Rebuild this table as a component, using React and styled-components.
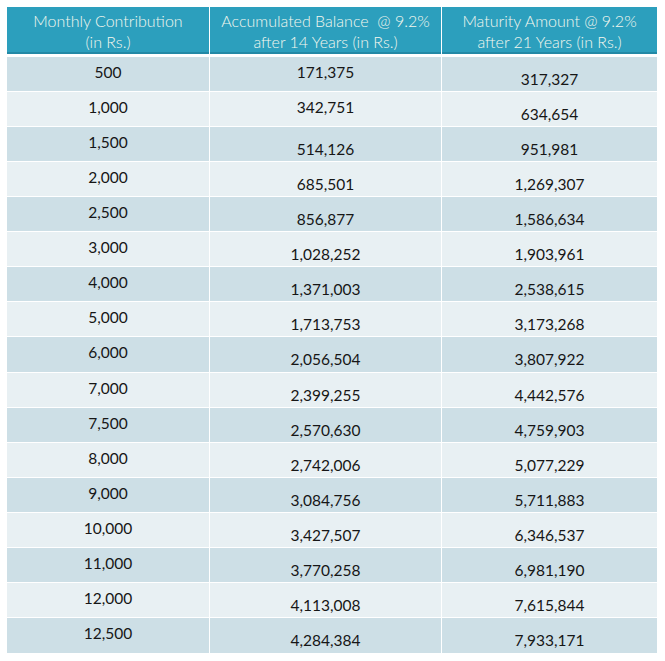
import React from "react";
import styled, { createGlobalStyle } from "styled-components";

const Global = createGlobalStyle`
  html, body { margin: 0; padding: 0; background: #ffffff; }
  body { font-family: Lato, "Open Sans", sans-serif; }
`;

const Page = styled.div`
  padding: 7px 8px 8px 7px;
  width: 650px;
`;

const Table = styled.div`
  display: grid;
  grid-template-columns: 202px 231px 215px;
  column-gap: 1px;
  row-gap: 1px;
  background: #ffffff;
`;

const HeadCell = styled.div`
  background: #2c9fbd;
  border-bottom: 2px solid #2389a6;
  height: 45px;
  box-sizing: content-box;
  margin-bottom: 2px;
  color: #f4f7ee;
  font-size: 16px;
  font-weight: 300;
  line-height: 21px;
  text-align: center;
  display: flex;
  flex-direction: column;
  justify-content: flex-start;
  & > span { display: block; white-space: pre; }
  & > span:first-child { margin-top: 3px; }
`;

const Cell = styled.div`
  background: ${(p) => (p.$odd ? "#cddfe6" : "#e8f0f3")};
  height: ${(p) => (p.$tall ? 35 : 34)}px;
  box-sizing: border-box;
  padding-top: ${(p) => (p.$low ? 12 : 5)}px;
  font-size: 15.5px;
  line-height: 20px;
  color: #161616;
  text-align: center;
`;

const rows = [
  ["500", "171,375", "317,327"],
  ["1,000", "342,751", "634,654"],
  ["1,500", "514,126", "951,981"],
  ["2,000", "685,501", "1,269,307"],
  ["2,500", "856,877", "1,586,634"],
  ["3,000", "1,028,252", "1,903,961"],
  ["4,000", "1,371,003", "2,538,615"],
  ["5,000", "1,713,753", "3,173,268"],
  ["6,000", "2,056,504", "3,807,922"],
  ["7,000", "2,399,255", "4,442,576"],
  ["7,500", "2,570,630", "4,759,903"],
  ["8,000", "2,742,006", "5,077,229"],
  ["9,000", "3,084,756", "5,711,883"],
  ["10,000", "3,427,507", "6,346,537"],
  ["11,000", "3,770,258", "6,981,190"],
  ["12,000", "4,113,008", "7,615,844"],
  ["12,500", "4,284,384", "7,933,171"],
];

export default function App() {
  return (
    <Page>
      <Global />
      <Table>
        <HeadCell>
          <span>Monthly Contribution</span>
          <span>(in Rs.)</span>
        </HeadCell>
        <HeadCell>
          <span>Accumulated Balance  @ 9.2%</span>
          <span>after 14 Years (in Rs.)</span>
        </HeadCell>
        <HeadCell>
          <span>Maturity Amount @ 9.2%</span>
          <span>after 21 Years (in Rs.)</span>
        </HeadCell>
        {rows.map((r, i) => {
          const odd = i % 2 === 0;
          const tall = i === 8 || i === 16;
          return (
            <React.Fragment key={i}>
              <Cell $odd={odd} $tall={tall}>{r[0]}</Cell>
              <Cell $odd={odd} $tall={tall} $low={i > 1}>{r[1]}</Cell>
              <Cell $odd={odd} $tall={tall} $low>{r[2]}</Cell>
            </React.Fragment>
          );
        })}
      </Table>
    </Page>
  );
}
